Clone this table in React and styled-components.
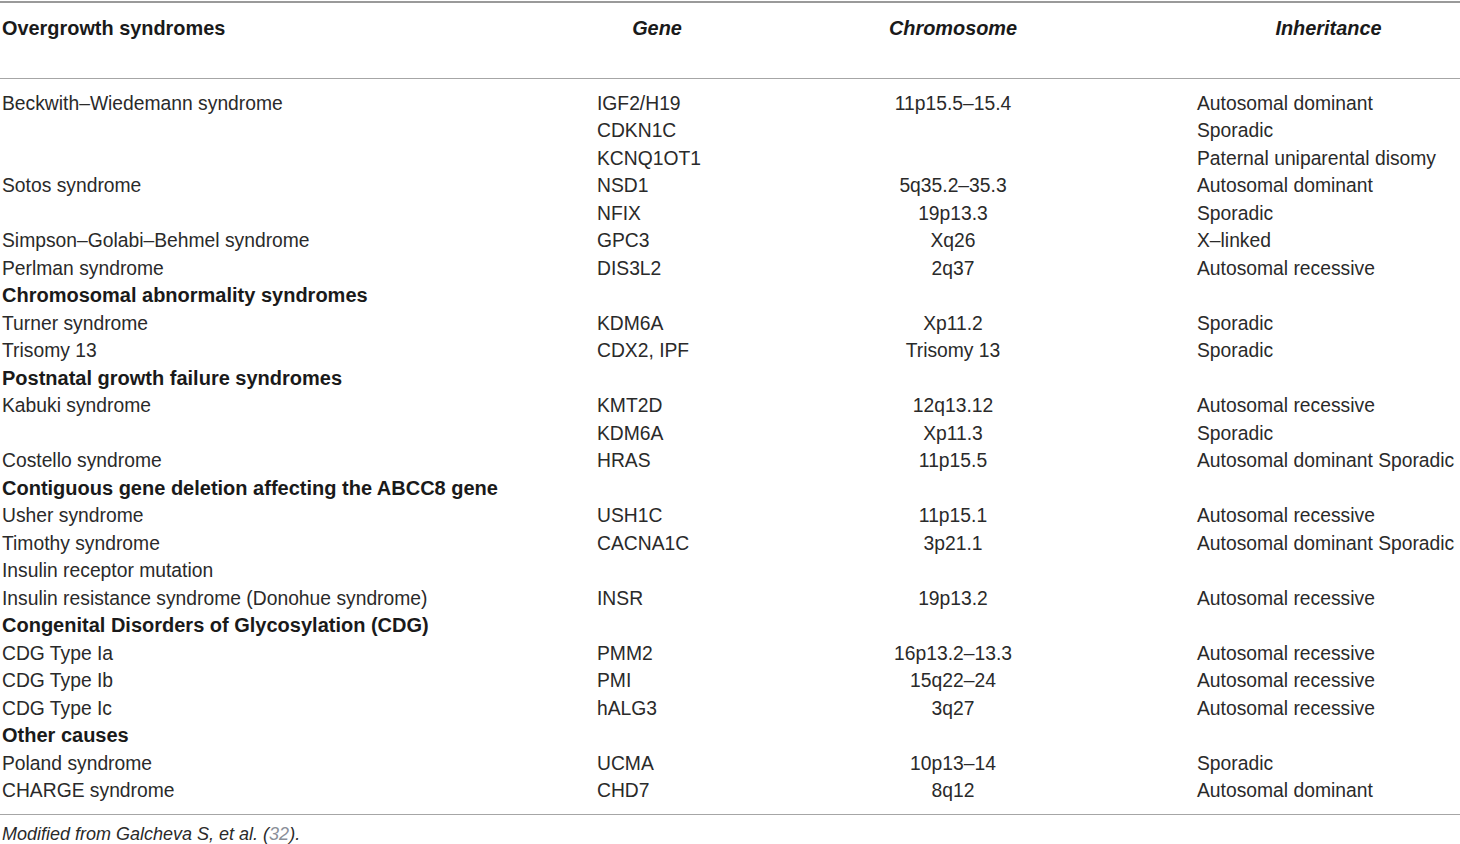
import React from 'react';
import styled, { createGlobalStyle } from 'styled-components';

const GlobalStyle = createGlobalStyle`
  html, body {
    margin: 0;
    padding: 0;
    background: #ffffff;
  }
  body {
    font-family: "Liberation Sans", Arial, Helvetica, sans-serif;
    color: #2a2a2a;
  }
`;

const Page = styled.div`
  width: 1460px;
  padding-top: 1px;
`;

const Table = styled.div`
  border-top: 2px solid #9a9a9a;
  border-bottom: 1px solid #a6a6a6;
`;

const Row = styled.div`
  display: grid;
  grid-template-columns: 597px 120px 472px 1fr;
  font-size: 19.3px;
  line-height: 27.48px;
  white-space: nowrap;
`;

const HeadRow = styled(Row)`
  height: 76px;
  padding-top: 12px;
  box-sizing: border-box;
  border-bottom: 1px solid #a6a6a6;
  font-weight: bold;
  font-size: 19.9px;
  color: #1a1a1a;
`;

const Body = styled.div`
  padding: 11px 0 9px;
`;

const Cell = styled.div`
  padding-left: ${(p) => (p.$first ? '2px' : p.$last ? '8px' : '0')};
  text-align: ${(p) => (p.$center ? 'center' : 'left')};
  font-style: ${(p) => (p.$italic ? 'italic' : 'normal')};
`;

const Section = styled.div`
  grid-column: 1 / -1;
  padding-left: 2px;
  font-weight: bold;
  font-size: 20px;
  color: #1a1a1a;
`;

const Note = styled.p`
  margin: 6px 0 0 2px;
  font-size: 18px;
  line-height: 26px;
  font-style: italic;
  color: #2a2a2a;
`;

const Ref = styled.span`
  color: #8a8f99;
`;

const rows = [
  ['Beckwith–Wiedemann syndrome', 'IGF2/H19', '11p15.5–15.4', 'Autosomal dominant'],
  ['', 'CDKN1C', '', 'Sporadic'],
  ['', 'KCNQ1OT1', '', 'Paternal uniparental disomy'],
  ['Sotos syndrome', 'NSD1', '5q35.2–35.3', 'Autosomal dominant'],
  ['', 'NFIX', '19p13.3', 'Sporadic'],
  ['Simpson–Golabi–Behmel syndrome', 'GPC3', 'Xq26', 'X–linked'],
  ['Perlman syndrome', 'DIS3L2', '2q37', 'Autosomal recessive'],
  'Chromosomal abnormality syndromes',
  ['Turner syndrome', 'KDM6A', 'Xp11.2', 'Sporadic'],
  ['Trisomy 13', 'CDX2, IPF', 'Trisomy 13', 'Sporadic'],
  'Postnatal growth failure syndromes',
  ['Kabuki syndrome', 'KMT2D', '12q13.12', 'Autosomal recessive'],
  ['', 'KDM6A', 'Xp11.3', 'Sporadic'],
  ['Costello syndrome', 'HRAS', '11p15.5', 'Autosomal dominant Sporadic'],
  'Contiguous gene deletion affecting the ABCC8 gene',
  ['Usher syndrome', 'USH1C', '11p15.1', 'Autosomal recessive'],
  ['Timothy syndrome', 'CACNA1C', '3p21.1', 'Autosomal dominant Sporadic'],
  ['Insulin receptor mutation', '', '', ''],
  ['Insulin resistance syndrome (Donohue syndrome)', 'INSR', '19p13.2', 'Autosomal recessive'],
  'Congenital Disorders of Glycosylation (CDG)',
  ['CDG Type Ia', 'PMM2', '16p13.2–13.3', 'Autosomal recessive'],
  ['CDG Type Ib', 'PMI', '15q22–24', 'Autosomal recessive'],
  ['CDG Type Ic', 'hALG3', '3q27', 'Autosomal recessive'],
  'Other causes',
  ['Poland syndrome', 'UCMA', '10p13–14', 'Sporadic'],
  ['CHARGE syndrome', 'CHD7', '8q12', 'Autosomal dominant'],
];

const App = () => {
  return (
    <Page>
      <GlobalStyle />
      <Table>
        <HeadRow>
          <Cell $first>Overgrowth syndromes</Cell>
          <Cell $center $italic>Gene</Cell>
          <Cell $center $italic>Chromosome</Cell>
          <Cell $last $center $italic>Inheritance</Cell>
        </HeadRow>
        <Body>
          {rows.map((r, i) =>
            typeof r === 'string' ? (
              <Row key={i}>
                <Section>{r}</Section>
              </Row>
            ) : (
              <Row key={i}>
                <Cell $first>{r[0]}</Cell>
                <Cell>{r[1]}</Cell>
                <Cell $center>{r[2]}</Cell>
                <Cell $last>{r[3]}</Cell>
              </Row>
            )
          )}
        </Body>
      </Table>
      <Note>
        Modified from Galcheva S, et al. (<Ref>32</Ref>).
      </Note>
    </Page>
  );
};

export default App;
